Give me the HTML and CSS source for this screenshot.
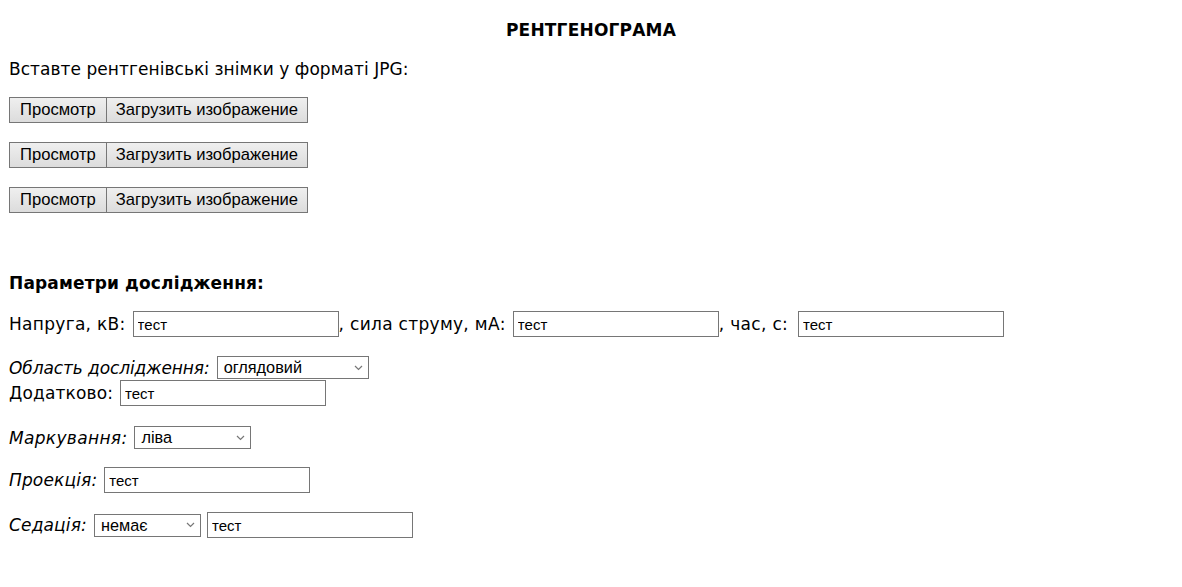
FILE: index.html
```html
<!DOCTYPE html>
<html lang="uk">
<head>
<meta charset="utf-8">
<title>Рентгенограма</title>
<link rel="stylesheet" href="styles.css">
</head>
<body>
<div class="page">
  <h1 class="title">РЕНТГЕНОГРАМА</h1>
  <p class="intro">Вставте рентгенівські знімки у форматі JPG:</p>
  <div class="uploads">
    <div class="upload"><button class="btn">Просмотр</button><button class="btn">Загрузить изображение</button></div>
    <div class="upload"><button class="btn">Просмотр</button><button class="btn">Загрузить изображение</button></div>
    <div class="upload"><button class="btn">Просмотр</button><button class="btn">Загрузить изображение</button></div>
  </div>
  <h2 class="section">Параметри дослідження:</h2>
  <div class="row r1">
    <span class="lbl">Напруга, кВ:</span><input class="field" type="text" value="тест"><span class="lbl">, сила струму, мА:</span><input class="field" type="text" value="тест"><span class="lbl last">, час, с:</span><input class="field" type="text" value="тест">
  </div>
  <div class="row r2">
    <span class="lbl em narrow">Область дослідження:</span><div class="sel w152">оглядовий</div>
  </div>
  <div class="row r3">
    <span class="lbl">Додатково:</span><input class="field" type="text" value="тест">
  </div>
  <div class="row r4">
    <span class="lbl em wide">Маркування:</span><div class="sel w117">ліва</div>
  </div>
  <div class="row r5">
    <span class="lbl em">Проекція:</span><input class="field" type="text" value="тест">
  </div>
  <div class="row r6">
    <span class="lbl em">Седація:</span><div class="sel w107">немає</div><input class="field gap6" type="text" value="тест">
  </div>
</div>
</body>
</html>
```
FILE: styles.css
```css
html, body { margin: 0; padding: 0; background: #fff; }
body { font-family: "DejaVu Sans", Verdana, sans-serif; font-size: 17px; letter-spacing: 0.15px; color: #000; }
.page { padding: 0 9px; display: flex; flex-direction: column; align-items: stretch; }
.title { margin: 20px 0 0; font-size: 17px; line-height: 20px; font-weight: bold; text-align: center; letter-spacing: 0.2px; }
.intro { margin: 19px 0 0; line-height: 20px; letter-spacing: 0.05px; }
.uploads { display: flex; flex-direction: column; gap: 19px; margin-top: 18px; }
.upload { display: flex; }
.btn {
  font-family: "Liberation Sans", Arial, sans-serif; font-size: 16.6px; letter-spacing: 0; color: #000;
  height: 26px; padding: 0 10px; margin: 0;
  border: 1px solid #767676; border-radius: 0;
  background: linear-gradient(#efefef, #dcdcdc);
}
.btn + .btn { margin-left: -1px; padding: 0 9px; }
.section { margin: 60px 0 0; font-size: 17px; line-height: 20px; font-weight: bold; }
.row { display: flex; align-items: center; }
.lbl { white-space: pre; margin-right: 7px; line-height: 20px; }
.r1 .lbl { letter-spacing: 0.3px; }
.r1 .last { margin-right: 10px; }
.em { font-style: italic; }
.narrow { letter-spacing: -0.1px; }
.wide { letter-spacing: 0.33px; }
.field {
  box-sizing: border-box; width: 206px; height: 26px; margin: 0;
  border: 1px solid #767676; border-radius: 0; padding: 0 4px;
  font-family: "Liberation Sans", Arial, sans-serif; font-size: 15px; letter-spacing: 0; color: #000; background: #fff;
}
.gap6 { margin-left: 6px; }
.sel {
  box-sizing: border-box; height: 23px; border: 1px solid #767676; padding: 0 0 0 6px;
  font-family: "Liberation Sans", Arial, sans-serif; font-size: 16.3px; letter-spacing: 0; line-height: 21px; color: #000;
  background: #fff url("data:image/svg+xml,%3Csvg xmlns='http://www.w3.org/2000/svg' width='9' height='6' viewBox='0 0 9 6'%3E%3Cpath d='M1 1l3.5 3.5L8 1' fill='none' stroke='%23777' stroke-width='1.2'/%3E%3C/svg%3E") no-repeat right 5px center;
}
.w152 { width: 152px; }
.w117 { width: 117px; }
.w107 { width: 107px; }
.r1 { margin-top: 18px; }
.r2 { margin-top: 19px; }
.r3 { margin-top: 1px; }
.r4 { margin-top: 20px; }
.r5 { margin-top: 18px; }
.r6 { margin-top: 19px; }
```
